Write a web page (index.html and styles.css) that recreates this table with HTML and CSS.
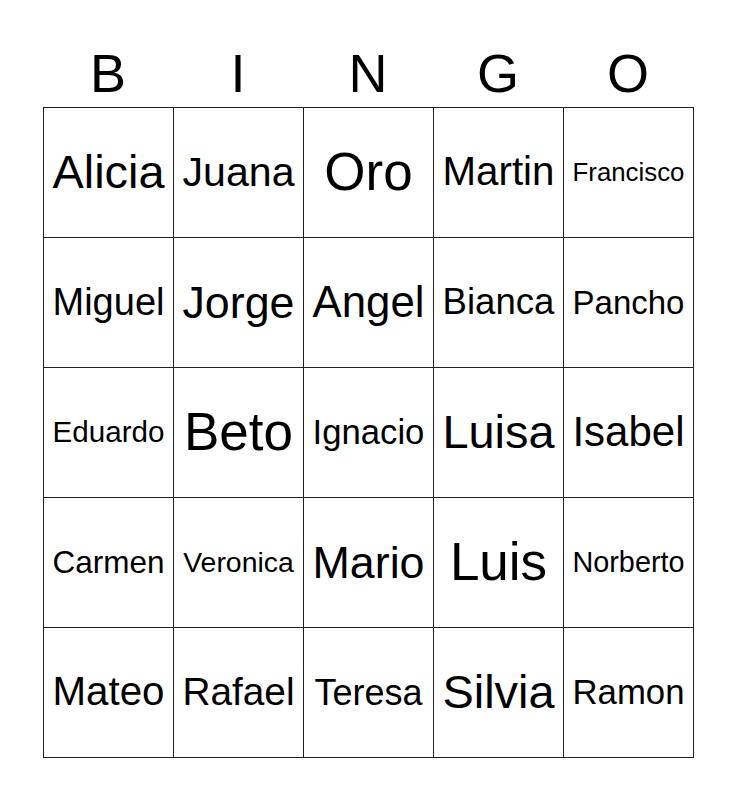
FILE: index.html
```html
<!DOCTYPE html>
<html>
<head>
<meta charset="utf-8">
<link rel="stylesheet" href="styles.css">
</head>
<body>
<div class="page">
  <div class="header">
    <span>B</span><span>I</span><span>N</span><span>G</span><span>O</span>
  </div>
  <div class="card">
    <div class="cell" style="font-size:46.9px">Alicia</div>
    <div class="cell" style="font-size:41.1px">Juana</div>
    <div class="cell" style="font-size:53px">Oro</div>
    <div class="cell" style="font-size:40.3px">Martin</div>
    <div class="cell" style="font-size:25.8px">Francisco</div>

    <div class="cell" style="font-size:38px">Miguel</div>
    <div class="cell" style="font-size:44.8px">Jorge</div>
    <div class="cell" style="font-size:43.8px">Angel</div>
    <div class="cell" style="font-size:36.6px">Bianca</div>
    <div class="cell" style="font-size:33px">Pancho</div>

    <div class="cell" style="font-size:29.6px">Eduardo</div>
    <div class="cell" style="font-size:53px">Beto</div>
    <div class="cell" style="font-size:34.7px">Ignacio</div>
    <div class="cell" style="font-size:46.9px">Luisa</div>
    <div class="cell" style="font-size:42px">Isabel</div>

    <div class="cell" style="font-size:31.5px">Carmen</div>
    <div class="cell" style="font-size:28.4px">Veronica</div>
    <div class="cell" style="font-size:44.8px">Mario</div>
    <div class="cell" style="font-size:53px">Luis</div>
    <div class="cell" style="font-size:28.8px">Norberto</div>

    <div class="cell" style="font-size:40.3px">Mateo</div>
    <div class="cell" style="font-size:38.8px">Rafael</div>
    <div class="cell" style="font-size:36px">Teresa</div>
    <div class="cell" style="font-size:46.9px">Silvia</div>
    <div class="cell" style="font-size:34.75px">Ramon</div>
  </div>
</div>
</body>
</html>
```

FILE: styles.css
```css
html, body {
  margin: 0;
  padding: 0;
  background: #ffffff;
}

body {
  font-family: "Liberation Sans", Arial, sans-serif;
  color: #000000;
}

.page {
  padding: 42px 0 0 43px;
}

.header {
  display: grid;
  grid-template-columns: repeat(5, 130px);
  height: 65px;
  font-size: 54px;
  line-height: 62px;
  text-align: center;
}

.card {
  display: grid;
  grid-template-columns: repeat(5, 129px);
  grid-template-rows: repeat(5, 129px);
  gap: 1px;
  padding: 1px;
  width: 649px;
  background: #222222;
}

.cell {
  background: #ffffff;
  display: flex;
  align-items: center;
  justify-content: center;
  white-space: nowrap;
  line-height: 1.15;
}
```
